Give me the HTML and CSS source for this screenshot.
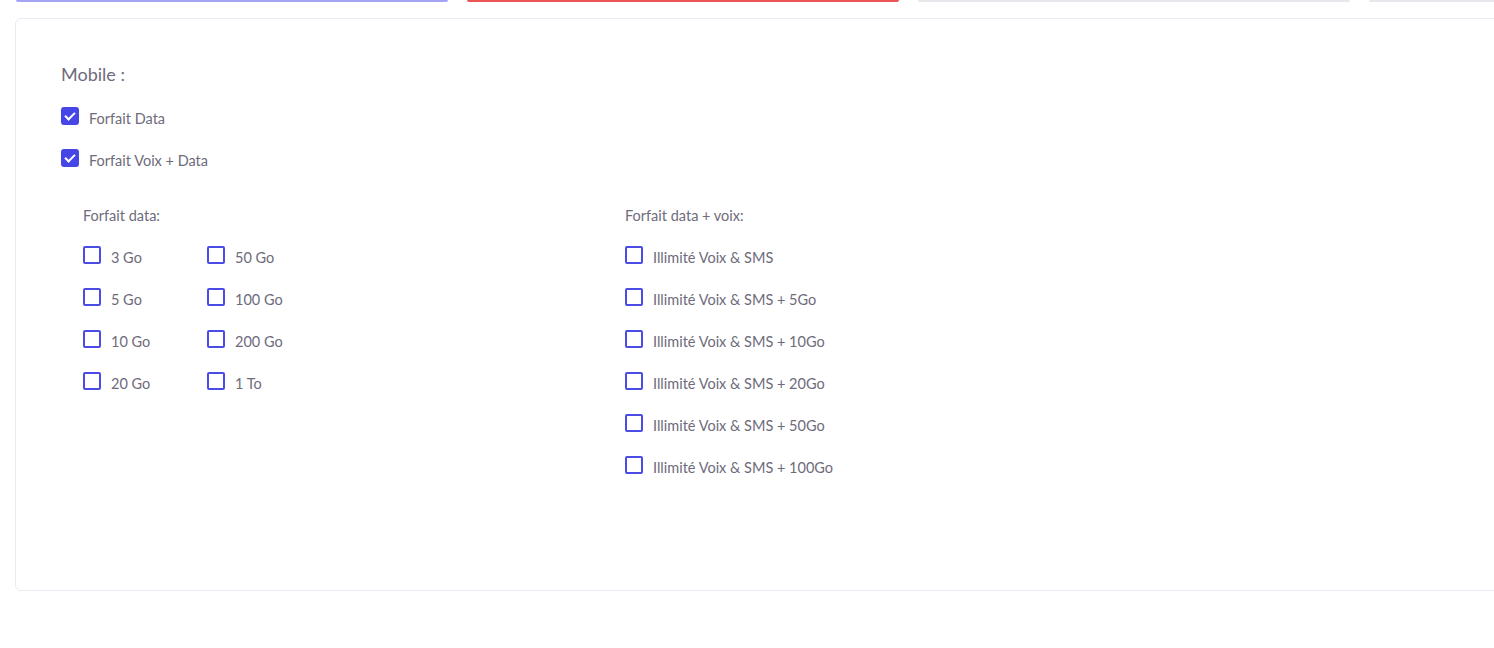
FILE: index.html
```html
<!DOCTYPE html>
<html lang="fr">
<head>
<meta charset="utf-8">
<title>Mobile</title>
<link rel="stylesheet" href="styles.css">
</head>
<body>
<div class="steps">
  <div class="step step-done"></div>
  <div class="step step-active"></div>
  <div class="step"></div>
  <div class="step"></div>
</div>

<div class="card">
  <h4 class="section-title">Mobile :</h4>

  <label class="check">
    <input type="checkbox" checked>
    <span class="box"></span>
    <span class="text">Forfait Data</span>
  </label>
  <label class="check">
    <input type="checkbox" checked>
    <span class="box"></span>
    <span class="text">Forfait Voix + Data</span>
  </label>

  <div class="options">
    <div class="group group-data">
      <div class="group-title">Forfait data:</div>
      <div class="data-grid">
        <label class="check"><input type="checkbox"><span class="box"></span><span class="text">3 Go</span></label>
        <label class="check"><input type="checkbox"><span class="box"></span><span class="text">50 Go</span></label>
        <label class="check"><input type="checkbox"><span class="box"></span><span class="text">5 Go</span></label>
        <label class="check"><input type="checkbox"><span class="box"></span><span class="text">100 Go</span></label>
        <label class="check"><input type="checkbox"><span class="box"></span><span class="text">10 Go</span></label>
        <label class="check"><input type="checkbox"><span class="box"></span><span class="text">200 Go</span></label>
        <label class="check"><input type="checkbox"><span class="box"></span><span class="text">20 Go</span></label>
        <label class="check"><input type="checkbox"><span class="box"></span><span class="text">1 To</span></label>
      </div>
    </div>

    <div class="group group-voice">
      <div class="group-title">Forfait data + voix:</div>
      <div class="voice-list">
        <label class="check"><input type="checkbox"><span class="box"></span><span class="text">Illimité Voix &amp; SMS</span></label>
        <label class="check"><input type="checkbox"><span class="box"></span><span class="text">Illimité Voix &amp; SMS + 5Go</span></label>
        <label class="check"><input type="checkbox"><span class="box"></span><span class="text">Illimité Voix &amp; SMS + 10Go</span></label>
        <label class="check"><input type="checkbox"><span class="box"></span><span class="text">Illimité Voix &amp; SMS + 20Go</span></label>
        <label class="check"><input type="checkbox"><span class="box"></span><span class="text">Illimité Voix &amp; SMS + 50Go</span></label>
        <label class="check"><input type="checkbox"><span class="box"></span><span class="text">Illimité Voix &amp; SMS + 100Go</span></label>
      </div>
    </div>
  </div>
</div>
</body>
</html>
```

FILE: styles.css
```css
html, body {
  margin: 0;
  padding: 0;
  background: #ffffff;
  overflow: hidden;
}

body {
  font-family: Lato, "Noto Sans", sans-serif;
  color: #6e6b7b;
  width: 1520px;
}

/* progress steps along the top */
.steps {
  display: grid;
  grid-template-columns: repeat(4, 432px);
  column-gap: 19px;
  padding-left: 16px;
  height: 2px;
}

.step {
  height: 2px;
  background: #e6e8ec;
  border-radius: 0 0 3px 3px;
}

.step-done {
  background: #a4a3f4;
}

.step-active {
  background: #ea5455;
}

/* main card */
.card {
  margin: 16px 0 0 15px;
  border: 1px solid #ebe9f1;
  border-radius: 6px;
  padding: 44px 45px 0 45px;
  height: 573px;
  box-sizing: border-box;
  width: 1520px;
}

.section-title {
  margin: 0 0 22px 0;
  font-size: 18px;
  font-weight: 400;
  line-height: 22px;
  color: #6e6b7b;
}

.check {
  display: flex;
  align-items: center;
  height: 18px;
  margin-bottom: 24px;
  cursor: pointer;
  font-size: 14.5px;
}

.check input {
  display: none;
}

.box {
  flex: none;
  width: 18px;
  height: 18px;
  box-sizing: border-box;
  border: 2px solid #4b4be6;
  border-radius: 2px;
  margin-right: 10px;
  position: relative;
}

.check input:checked + .box {
  background: #4646e6;
  border-color: #4646e6;
  border-radius: 3px;
}

.check input:checked + .box::after {
  content: "";
  position: absolute;
  left: 2px;
  top: 0px;
  width: 8px;
  height: 4px;
  border-left: 2.5px solid #fff;
  border-bottom: 2.5px solid #fff;
  transform: translate(0, 3px) rotate(-45deg);
  transform-origin: center;
}

.text {
  line-height: 18px;
  position: relative;
  top: 3px;
}

/* sub option groups */
.options {
  display: flex;
  padding: 16px 0 0 22px;
}

.group-data {
  width: 542px;
}

.group-title {
  font-size: 14.5px;
  line-height: 18px;
  margin-bottom: 21px;
}

.data-grid {
  display: grid;
  grid-template-columns: 124px 124px;
}
```
